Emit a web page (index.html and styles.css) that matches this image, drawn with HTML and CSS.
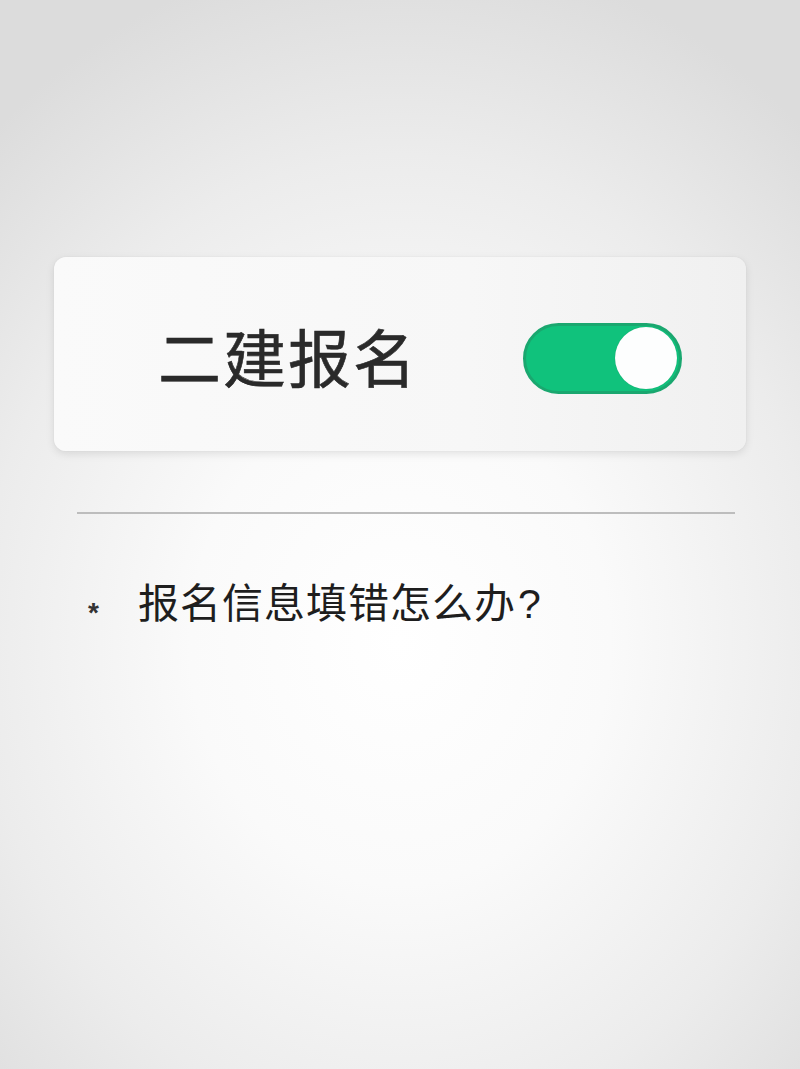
FILE: index.html
```html
<!DOCTYPE html>
<html lang="zh-CN">
<head>
<meta charset="utf-8">
<title>二建报名</title>
<link rel="stylesheet" href="styles.css">
</head>
<body>
<main class="page">
  <section class="card">
    <h1 class="card-title">二建报名</h1>
    <div class="switch is-on" role="switch" aria-checked="true">
      <span class="switch-knob"></span>
    </div>
  </section>
  <hr class="divider">
  <p class="faq"><span class="faq-mark">*</span><span class="faq-text">报名信息填错怎么办<span class="faq-q">?</span></span></p>
</main>
</body>
</html>
```
FILE: styles.css
```css
html, body {
  margin: 0;
  padding: 0;
  height: 100%;
}

body {
  background: radial-gradient(ellipse 75% 65% at 50% 60%, #ffffff 0%, #fafafa 35%, #ececec 70%, #dcdcdc 100%);
  font-family: "Noto Sans CJK SC", "Noto Sans", sans-serif;
  color: #2b2b2b;
}

.page {
  min-height: 1069px;
  display: flex;
  flex-direction: column;
  padding-top: 257px;
  box-sizing: border-box;
}

.card {
  margin: 0 54px;
  height: 194px;
  border-radius: 12px;
  background: linear-gradient(90deg, #fafafa 0%, #f7f7f7 60%, #f0f0f0 100%);
  box-shadow: 0 3px 8px rgba(0, 0, 0, 0.10), 0 0 2px rgba(0, 0, 0, 0.06);
  display: flex;
  align-items: center;
  justify-content: space-between;
  padding: 0 64px 0 104px;
  box-sizing: border-box;
}

.card-title {
  margin: 0;
  font-size: 63px;
  font-weight: 400;
  color: #2a2a2a;
  letter-spacing: 2px;
  line-height: 1;
  -webkit-text-stroke: 0.6px #2a2a2a;
}

.switch {
  width: 159px;
  height: 71px;
  border-radius: 36px;
  background: #10c27c;
  border: 3px solid #1aa76f;
  box-sizing: border-box;
  display: flex;
  align-items: center;
  justify-content: flex-end;
  padding-right: 2px;
  position: relative;
  top: 4px;
}

.switch-knob {
  width: 62px;
  height: 62px;
  border-radius: 50%;
  background: #fdfefe;
  box-shadow: 0 0 1px rgba(0, 0, 0, 0.2);
}

.divider {
  margin: 61px 65px 0 77px;
  border: 0;
  height: 2px;
  background: #bdbdbd;
}

.faq {
  margin: 62px 0 0 88px;
  display: flex;
  align-items: center;
  font-size: 41px;
  line-height: 1.2;
  color: #1e1e1e;
}

.faq-mark {
  font-family: "Liberation Sans", sans-serif;
  font-weight: 700;
  font-size: 28px;
  width: 50px;
  position: relative;
  top: 10px;
  color: #333;
}

.faq-text {
  letter-spacing: 1px;
}

.faq-q {
  font-family: "Liberation Sans", sans-serif;
  margin-left: 2px;
}
```
